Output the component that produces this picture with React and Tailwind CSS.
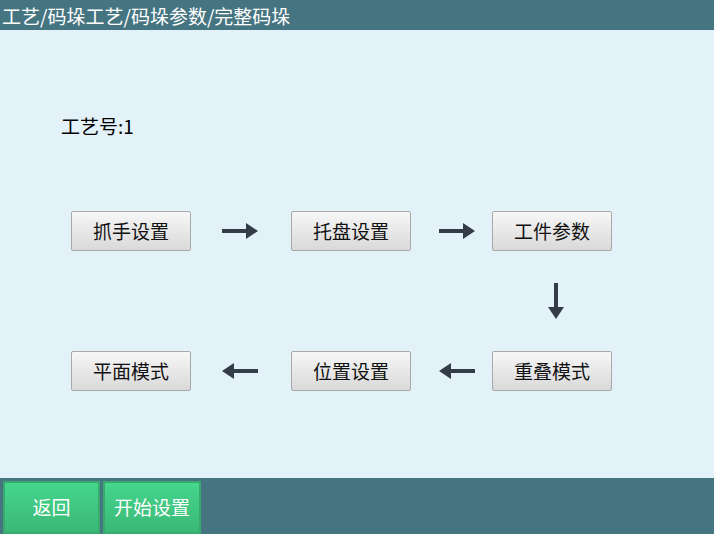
const font = { fontFamily: '"Microsoft YaHei", "Noto Sans CJK SC", sans-serif' };

function Arrow({ dir }) {
  // drawn pointing right, rotated for the other directions
  const rot = { right: "", left: "rotate-180", down: "rotate-90" }[dir];
  return (
    <svg width="36" height="16" viewBox="0 0 36 16" className={rot}>
      <rect x="0" y="6" width="26" height="4" fill="#333c47" />
      <polygon points="24,0 36,8 24,16" fill="#333c47" />
    </svg>
  );
}

function StepButton({ children }) {
  return (
    <button className="w-[120px] h-[40px] rounded-[2px] border border-[#a9a9a9] bg-gradient-to-b from-[#f7f7f7] to-[#d9d9d9] text-[19px] text-[#111] flex items-center justify-center">
      {children}
    </button>
  );
}

export default function App() {
  return (
    <div className="w-[714px] h-[534px] flex flex-col bg-[#e3f2f8]" style={font}>
      {/* header */}
      <div className="h-[30px] bg-[#467582] text-white text-[19px] leading-[30px] pl-[2px] pt-[1px]">
        工艺/码垛工艺/码垛参数/完整码垛
      </div>

      {/* body */}
      <div className="flex-1 flex flex-col">
        <div className="pl-[61px] pt-[84px] text-[19px] leading-[24px] text-black">工艺号:1</div>

        <div className="flex items-center pl-[71px] mt-[73px]">
          <StepButton>抓手设置</StepButton>
          <div className="w-[100px] flex justify-center pr-[2px]">
            <Arrow dir="right" />
          </div>
          <StepButton>托盘设置</StepButton>
          <div className="w-[81px] flex justify-center pl-[11px]">
            <Arrow dir="right" />
          </div>
          <StepButton>工件参数</StepButton>
        </div>

        <div className="flex pl-[491px] h-[100px] items-center">
          <div className="w-[120px] flex justify-center pl-[10px]">
            <Arrow dir="down" />
          </div>
        </div>

        <div className="flex items-center pl-[71px]">
          <StepButton>平面模式</StepButton>
          <div className="w-[100px] flex justify-center pr-[2px]">
            <Arrow dir="left" />
          </div>
          <StepButton>位置设置</StepButton>
          <div className="w-[81px] flex justify-center pl-[11px]">
            <Arrow dir="left" />
          </div>
          <StepButton>重叠模式</StepButton>
        </div>
      </div>

      {/* footer */}
      <div className="h-[56px] bg-[#467582] flex items-end gap-[3px] pl-[3px]">
        <button className="w-[97px] h-[53px] bg-gradient-to-b from-[#45d68c] to-[#3bb877] border-2 border-[#3aa96f] text-white text-[19px]">
          返回
        </button>
        <button className="w-[98px] h-[53px] bg-gradient-to-b from-[#45d68c] to-[#3bb877] border-2 border-[#3aa96f] text-white text-[19px]">
          开始设置
        </button>
      </div>
    </div>
  );
}
